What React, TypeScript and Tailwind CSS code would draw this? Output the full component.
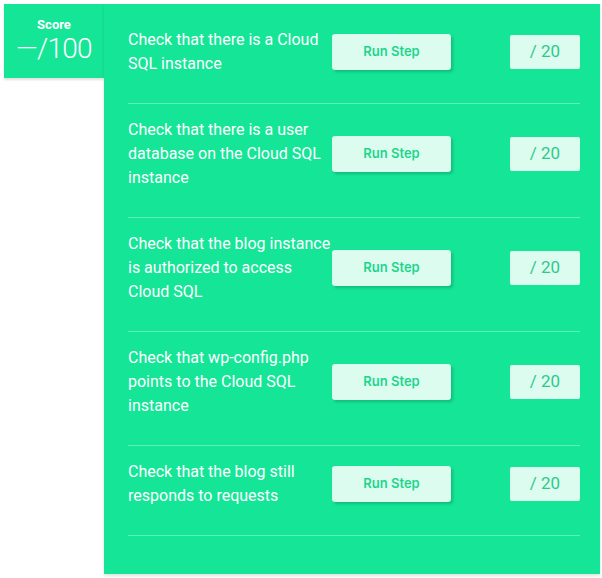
import React from 'react'

const STEPS = [
  'Check that there is a Cloud SQL instance',
  'Check that there is a user database on the Cloud SQL instance',
  'Check that the blog instance is authorized to access Cloud SQL',
  'Check that wp-config.php points to the Cloud SQL instance',
  'Check that the blog still responds to requests',
]

export default function App() {
  return (
    <div className="w-[602px] h-[578px] bg-white flex items-start pt-1 pl-1" style={{ fontFamily: 'Roboto, "Liberation Sans", sans-serif' }}>
      {/* score badge */}
      <div className="w-[100px] h-[74px] bg-[#15e597] shadow-[0_2px_2px_rgba(0,0,0,0.12)] flex flex-col items-center text-white pt-[13px]">
        <div className="text-[13px] font-bold leading-4">Score</div>
        <div className="text-[28px] font-light leading-8 tracking-tight">—/100</div>
      </div>

      {/* steps panel */}
      <div className="w-[496px] h-[570px] bg-[#15e597] shadow-[0_2px_3px_rgba(0,0,0,0.12)] pl-6 pr-5 pt-[10px]">
        {STEPS.map(s => (
          <div key={s} className="flex items-center pt-[14px] pb-[27px] border-b border-[#5cefb8]">
            <div className="w-[204px] text-white text-[16px] leading-6">{s}</div>
            <button type="button" className="w-[119px] h-9 rounded-[3px] bg-[#dcfcef] text-[#1cd68d] text-[13px] font-semibold shadow-[2px_2px_3px_rgba(0,0,0,0.18)]" style={{ fontFamily: 'Inter, "Open Sans", sans-serif' }}>Run Step</button>
            <div className="ml-auto w-[70px] h-[34px] rounded-[2px] bg-[#dcfcef] text-[#2fc98c] text-[17px] flex items-center justify-center">/ 20</div>
          </div>
        ))}
      </div>
    </div>
  )
}
